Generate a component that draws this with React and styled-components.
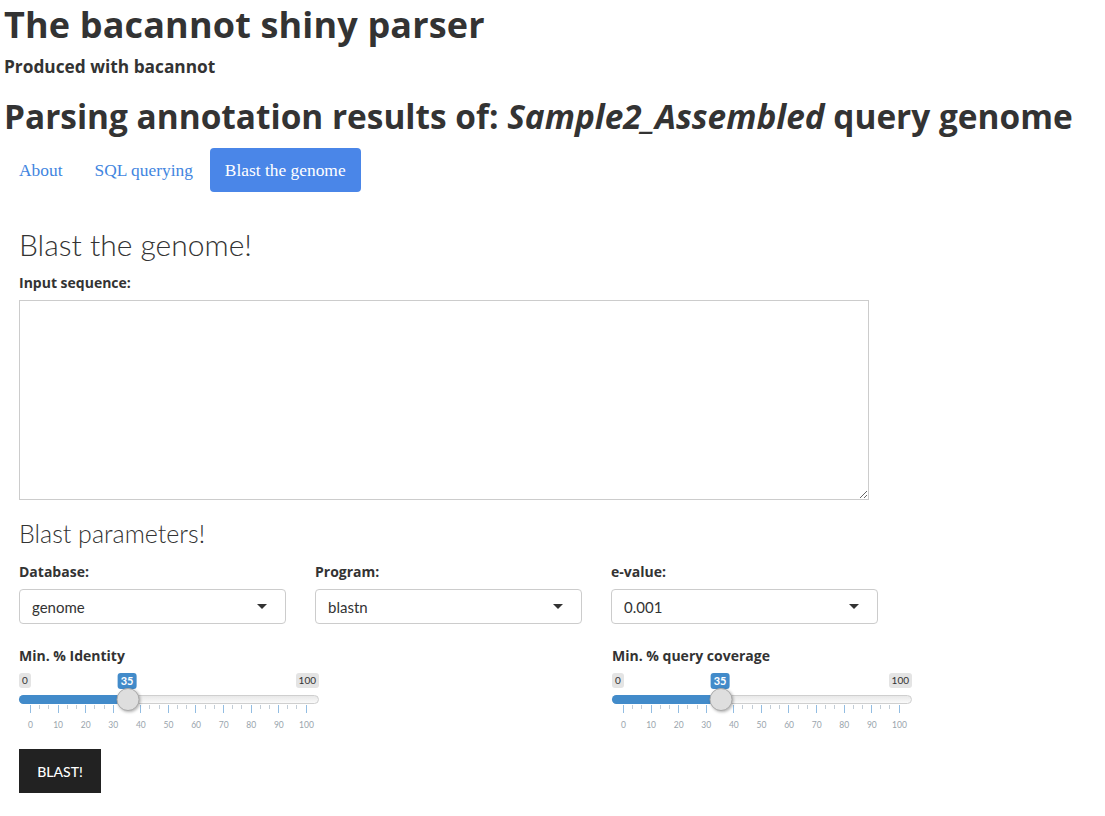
import React from "react";
import styled, { createGlobalStyle } from "styled-components";

const GlobalStyle = createGlobalStyle`
  body {
    margin: 0;
    background: #fff;
    color: #333;
    font-family: Lato, "Noto Sans", sans-serif;
  }
`;

const Page = styled.div`
  padding: 0 4px;
`;

const Title = styled.h1`
  font-family: "Open Sans", Lato, sans-serif;
  font-weight: 700;
  font-size: 36px;
  line-height: 42px;
  margin: 4px 0 0;
  letter-spacing: 0.15px;
`;

const Subtitle = styled.h4`
  font-family: "Open Sans", Lato, sans-serif;
  font-weight: 700;
  font-size: 17.3px;
  line-height: 20px;
  margin: 11px 0 0;
`;

const Heading = styled.h2`
  font-family: "Open Sans", Lato, sans-serif;
  font-weight: 700;
  font-size: 33.4px;
  line-height: 40px;
  margin: 19px 0 0;
  white-space: nowrap;
`;

const Tabs = styled.ul`
  display: flex;
  list-style: none;
  padding: 0;
  margin: 12px 0 0;
  gap: 2px;
`;

const Tab = styled.li`
  font-family: "Liberation Serif", "DejaVu Serif", serif;
  font-size: 17.4px;
  height: 44px;
  display: flex;
  align-items: center;
  padding: 0 15px;
  border-radius: 4px;
  color: ${(p) => (p.$active ? "#fff" : "#4285e0")};
  background: ${(p) => (p.$active ? "#4a86e8" : "transparent")};
`;

const Pane = styled.div`
  padding: 0 15px;
`;

const PaneTitle = styled.h3`
  font-weight: 300;
  font-size: 30px;
  line-height: 36px;
  margin: 34px 0 0;
`;

const SubTitle = styled.h4`
  font-weight: 300;
  font-size: 25px;
  line-height: 30px;
  margin: 18px 0 0;
`;

const Field = styled.div`
  margin-top: 12px;
`;

const Label = styled.label`
  display: block;
  font-family: "Open Sans", Lato, sans-serif;
  font-weight: 700;
  font-size: 14px;
  line-height: 18px;
  margin-bottom: 8px;
`;

const TextArea = styled.textarea`
  display: block;
  box-sizing: border-box;
  width: 850px;
  height: 200px;
  border: 1px solid #ccc;
  margin: 0;
  padding: 6px 12px;
`;

const ParamsGrid = styled.div`
  display: grid;
  grid-template-columns: repeat(3, 267px);
  column-gap: 29px;
  margin-top: 15px;
`;

const SelectBox = styled.div`
  box-sizing: border-box;
  height: 35px;
  border: 1px solid #ccc;
  border-radius: 4px;
  display: flex;
  align-items: center;
  justify-content: space-between;
  padding: 0 18px 0 12px;
  font-size: 15px;
`;

const Caret = styled.span`
  width: 0;
  height: 0;
  border-left: 5px solid transparent;
  border-right: 5px solid transparent;
  border-top: 5px solid #333;
`;

const SliderGrid = styled.div`
  display: grid;
  grid-template-columns: 593px 300px;
  margin-top: 23px;
`;

const SliderWrap = styled.div`
  position: relative;
  width: 300px;
`;

const TagRow = styled.div`
  display: flex;
  justify-content: space-between;
  margin-top: 1px;
  height: 16px;
`;

const EdgeTag = styled.span`
  font-size: 10px;
  line-height: 15px;
  height: 15px;
  padding: 0 3px;
  border-radius: 3px;
  background: #e4e4e4;
  color: #333;
`;

const ValueTag = styled.span`
  position: absolute;
  top: 0;
  transform: translateX(-50%);
  font-size: 11px;
  line-height: 16px;
  padding: 0 3px;
  border-radius: 3px;
  background: #428bca;
  color: #fff;
  font-weight: 700;
`;

const Track = styled.div`
  position: relative;
  margin-top: 6px;
  height: 9px;
  box-sizing: border-box;
  border: 1px solid #cfcfcf;
  border-radius: 5px;
  background: linear-gradient(#e8e8e8, #fafafa);
`;

const Fill = styled.div`
  height: 9px;
  margin: -1px 0 0 -1px;
  border-radius: 5px 0 0 5px;
  background: #428bca;
`;

const Thumb = styled.div`
  position: absolute;
  top: -8px;
  width: 23px;
  height: 23px;
  box-sizing: border-box;
  transform: translateX(-50%);
  border-radius: 50%;
  border: 1px solid #aaa;
  background: #dedede;
  box-shadow: 1px 1px 3px rgba(0, 0, 0, 0.3);
`;

const Scale = styled.div`
  padding: 0 12px 0 11px;
`;

const TickRow = styled.div`
  display: flex;
  justify-content: space-between;
  align-items: flex-start;
  height: 8px;
  margin-top: 1px;
`;

const Tick = styled.span`
  width: 1px;
  height: ${(p) => (p.$major ? 8 : 4)}px;
  background: ${(p) => (p.$major ? "#93bde2" : "#c3cdd6")};
`;

const LabelRow = styled.div`
  display: flex;
  justify-content: space-between;
  margin-top: 7px;
  height: 11px;
`;

const TickLabel = styled.span`
  width: 1px;
  display: flex;
  justify-content: center;
  font-size: 8.5px;
  line-height: 11px;
  color: #99a4ac;
`;

const Button = styled.button`
  display: block;
  margin-top: 18px;
  width: 82px;
  height: 44px;
  border: none;
  background: #222;
  color: #fff;
  font-family: Lato, sans-serif;
  font-size: 14px;
  font-weight: 500;
`;

function Slider({ label, value }) {
  // value position on the track: the scale runs from x=11 to x=287
  const pos = 11 + (value / 100) * 276;
  const ticks = Array.from({ length: 31 }, (_, i) => (
    <Tick key={i} $major={i % 3 === 0} />
  ));
  const labels = Array.from({ length: 11 }, (_, i) => (
    <TickLabel key={i}>{i * 10}</TickLabel>
  ));
  return (
    <div>
      <Label>{label}</Label>
      <SliderWrap>
        <TagRow>
          <EdgeTag>0</EdgeTag>
          <EdgeTag>100</EdgeTag>
        </TagRow>
        <ValueTag style={{ left: pos + 0.5 }}>{value}</ValueTag>
        <Track>
          <Fill style={{ width: pos }} />
          <Thumb style={{ left: pos }} />
        </Track>
        <Scale>
          <TickRow>{ticks}</TickRow>
          <LabelRow>{labels}</LabelRow>
        </Scale>
      </SliderWrap>
    </div>
  );
}

function Select({ label, value }) {
  return (
    <div>
      <Label>{label}</Label>
      <SelectBox>
        <span>{value}</span>
        <Caret />
      </SelectBox>
    </div>
  );
}

export default function App() {
  return (
    <Page>
      <GlobalStyle />
      <Title>The bacannot shiny parser</Title>
      <Subtitle>Produced with bacannot</Subtitle>
      <Heading>
        Parsing annotation results of: <i>Sample2_Assembled</i> query genome
      </Heading>
      <Tabs>
        <Tab>About</Tab>
        <Tab>SQL querying</Tab>
        <Tab $active>Blast the genome</Tab>
      </Tabs>
      <Pane>
        <PaneTitle>Blast the genome!</PaneTitle>
        <Field>
          <Label>Input sequence:</Label>
          <TextArea />
        </Field>
        <SubTitle>Blast parameters!</SubTitle>
        <ParamsGrid>
          <Select label="Database:" value="genome" />
          <Select label="Program:" value="blastn" />
          <Select label="e-value:" value="0.001" />
        </ParamsGrid>
        <SliderGrid>
          <Slider label="Min. % Identity" value={35} />
          <Slider label="Min. % query coverage" value={35} />
        </SliderGrid>
        <Button>BLAST!</Button>
      </Pane>
    </Page>
  );
}
